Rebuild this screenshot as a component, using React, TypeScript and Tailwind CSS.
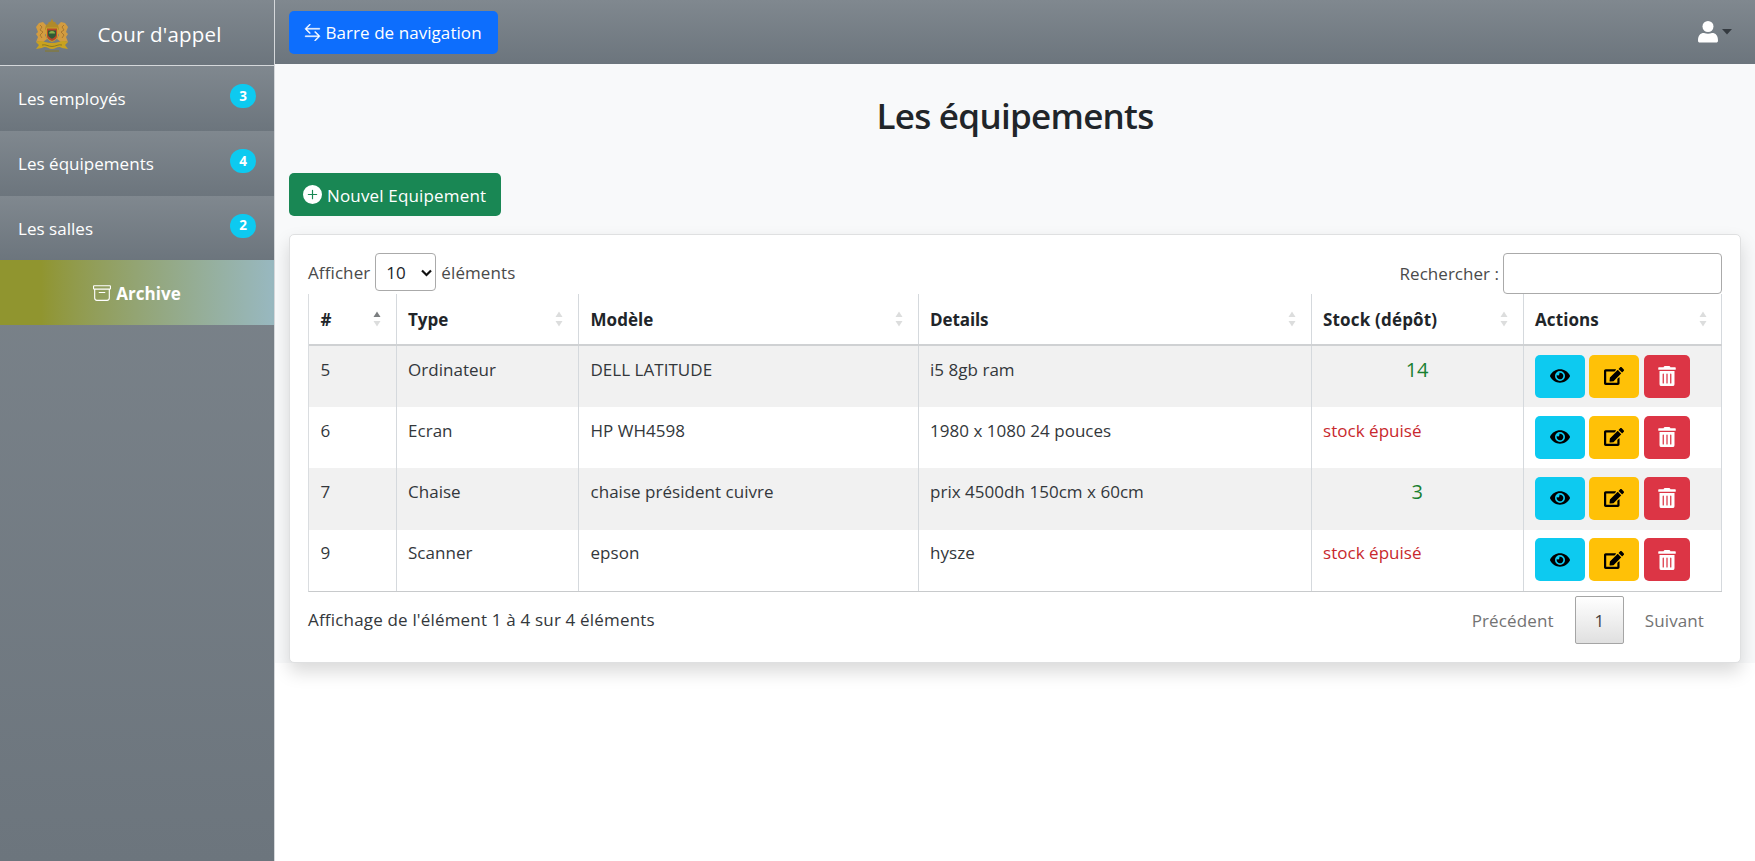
import { BsArrowLeftRight, BsPlusCircleFill, BsArchive } from "react-icons/bs";
import { FaEye, FaEdit, FaTrashAlt } from "react-icons/fa";

const menu = [
  { label: "Les employés", count: 3 },
  { label: "Les équipements", count: 4 },
  { label: "Les salles", count: 2 },
];

const columns = [
  { name: "#", track: "" },
  { name: "Type", track: "" },
  { name: "Modèle", track: "tracking-[0.05px]" },
  { name: "Details", track: "tracking-[-0.1px]" },
  { name: "Stock (dépôt)", track: "tracking-[0.18px]" },
  { name: "Actions", track: "tracking-[0.1px]" },
];

const rows = [
  { id: 5, type: "Ordinateur", model: "DELL LATITUDE", details: "i5 8gb ram", stock: 14 },
  { id: 6, type: "Ecran", model: "HP WH4598", details: "1980 x 1080 24 pouces", stock: 0 },
  { id: 7, type: "Chaise", model: "chaise président cuivre", details: "prix 4500dh 150cm x 60cm", stock: 3 },
  { id: 9, type: "Scanner", model: "epson", details: "hysze", stock: 0 },
];

function Emblem() {
  return (
    <svg width="34" height="34" viewBox="0 0 34 34" fill="none">
      <path d="M17 0.5l1.2 3 2.6 1-.8 3.5h-6l-.8-3.5 2.6-1z" fill="#b08a2c" />
      <path d="M9 11c1-5 5-6 8-6s7 1 8 6l-2 3H11z" fill="#b08a2a" />
      <path d="M4 5l4-1 3 3-1 4 2 3-2 3 2 4-4 3-4-1-3 1 2-5-2-3 2-2-2-5z" fill="#d39c40" />
      <path d="M30 5l-4-1-3 3 1 4-2 3 2 3-2 4 4 3 4-1 3 1-2-5 2-3-2-2 2-5z" fill="#d39c40" />
      <path d="M5 7l2 2-2 3 3 2-3 3 2 3M29 7l-2 2 2 3-3 2 3 3-2 3" stroke="#a9772f" strokeWidth="1" />
      <path d="M11.500 10h11v8c0 3-3 4.500-5.500 5.500-2.500-1-5.500-2.500-5.500-5.500z" fill="#b5482b" stroke="#c9a227" />
      <path d="M13 12.500h8v4c0 2-2 3.500-4 4.300-2-.8-4-2.300-4-4.300z" fill="#2e5a36" />
      <path d="M14 15.500a3 2.500 0 0 1 6 0z" fill="#86b04a" />
      <path d="M1 24c5-3 9 1 16 1s11-4 16-1l-3 3 3 4-6-1c-4-3-6 1-10 1s-6-4-10-1l-6 1 3-4z" fill="#c9a21f" />
      <path d="M7 27c4-1 6 1.500 10 1.500S23 26 27 27M10 33h14" stroke="#8a7a22" strokeWidth="1" />
    </svg>
  );
}

function SortMarks({ active }: { active: boolean }) {
  return (
    <svg width="8" height="16" viewBox="0 0 8 16" className="mb-[2px] shrink-0">
      <path d="M0.500 6 4 0.500 7.500 6z" fill={active ? "#7b7e80" : "#dcdddd"} />
      <path d="M0.500 10 4 15.500 7.500 10z" fill="#dcdddd" />
    </svg>
  );
}

function Actions() {
  return (
    <div className="flex gap-[4.500px] pl-[11px] pt-[8.500px]">
      <button className="flex h-[43px] w-[50px] items-center justify-center rounded-[5px] bg-[#0dcaf0] text-black">
        <FaEye size={20} />
      </button>
      <button className="flex h-[43px] w-[50px] items-center justify-center rounded-[5px] bg-[#ffc107] text-black">
        <FaEdit size={20} />
      </button>
      <button className="flex h-[43px] w-[46px] items-center justify-center rounded-[5px] bg-[#dc3545] text-white">
        <FaTrashAlt size={20} />
      </button>
    </div>
  );
}

const grid = "grid grid-cols-[87.5px_182.5px_339.5px_393px_212px_1fr]";

export default function App() {
  return (
    <div className="flex h-[861px] w-[1755px] overflow-hidden bg-white font-['Open_Sans','Noto_Sans',sans-serif] text-[17px] tracking-[0.03px] text-[#212529]">
      <aside className="flex w-[275px] shrink-0 flex-col border-r border-[#d5d8db] bg-linear-to-b from-[#80888f] to-[#6c757d] text-white">
        <div className="flex h-[66px] shrink-0 items-center border-b border-[#d5d8db] bg-linear-to-b from-[#80888f] to-[#6c757d] pl-[35px] pt-1">
          <Emblem />
          <span className="pl-[28.500px] text-[20.500px] tracking-[0.2px]">Cour d'appel</span>
        </div>
        {menu.map((m) => (
          <a key={m.label} className="flex h-[64.800px] justify-between bg-linear-to-b from-[#80888f] to-[#6c757d] px-[18px]">
            <span className="pt-[19px] leading-[27px]">{m.label}</span>
            <span className="mt-[18px] flex h-6 w-[26px] items-center justify-center rounded-full bg-[#0dcaf0] text-[13.500px] font-bold">{m.count}</span>
          </a>
        ))}
        <a className="flex h-[64.200px] items-center justify-center gap-[5px] bg-linear-to-r from-[#90952f] from-15% to-[#98b8c0] pt-[2px] font-bold">
          <BsArchive size={18} />
          <span>Archive</span>
        </a>
      </aside>
      <div className="flex grow flex-col">
        <header className="flex h-16 shrink-0 items-center justify-between bg-linear-to-b from-[#80888f] to-[#6c757d] pl-[14px] pr-[23px]">
          <button className="flex h-[43px] w-[209px] items-center gap-[4.500px] whitespace-nowrap rounded-[5px] bg-[#0d6efd] pl-[15px] text-white">
            <BsArrowLeftRight size={17} strokeWidth={0.4} />
            <span className="pt-[2px] tracking-[0.06px]">Barre de navigation</span>
          </button>
          <div className="flex items-center gap-[4px]">
            <svg width="20" height="22" viewBox="0 0 20 22" fill="#fff">
              <circle cx="10" cy="5.500" r="5.500" />
              <path d="M0 19.500C0 14.500 2.200 12 6 12c2.600 1 5.400 1 8 0 3.800 0 6 2.500 6 7.500 0 1.500-.6 2-2 2H2c-1.400 0-2-.5-2-2z" />
            </svg>
            <svg width="10" height="6" viewBox="0 0 10 6"><path d="M0 0h10L5 5.500z" fill="#343a40" /></svg>
          </div>
        </header>
        <main className="flex h-[598.500px] shrink-0 flex-col bg-[#f8f9fa] px-[14px]">
          <h1 className="h-[76px] pt-[28px] text-center text-[35px] font-semibold leading-[48px] tracking-[-0.72px]">Les équipements</h1>
          <button className="mt-[33px] flex h-[43px] w-[212px] shrink-0 items-center gap-[5px] whitespace-nowrap rounded-[5px] bg-[#198754] pl-[14px] text-white">
            <BsPlusCircleFill size={19} />
            <span className="pt-[2px] tracking-[0.16px]">Nouvel Equipement</span>
          </button>
          <section className="mt-[18px] h-[428.500px] shrink-0 rounded-[5px] border border-[#dfe0e1] bg-white px-[18px] pt-[18px] shadow-[0_9px_18px_rgba(0,0,0,0.15)]">
            <div className="flex h-[41px] justify-between text-[#4a4a4a]">
              <div className="flex h-[38px] items-center gap-[5px]">
                <span className="pt-[2px] tracking-[0.1px]">Afficher</span>
                <span className="flex h-[38px] w-[61px] items-center justify-between rounded-[4px] border border-[#aaa] pl-[10px] pr-[3px] pt-[1px] text-[#212529]">
                  10
                  <svg width="11" height="8" viewBox="0 0 11 8" fill="none"><path d="M1 1.500l4.500 4.500L10 1.500" stroke="#111" strokeWidth="2.200" /></svg>
                </span>
                <span className="pt-[2px] tracking-[0.1px]">éléments</span>
              </div>
              <div className="flex items-center gap-[4px]">
                <span className="pt-[1px]">Rechercher :</span>
                <input className="h-[41px] w-[219px] rounded-[4px] border border-[#aaa]" />
              </div>
            </div>
            <div className="border-b-[1.500px] border-l border-b-[#c8cacc] border-l-[#dadde0]">
              <div className={`${grid} h-[52px] border-b-2 border-[#cfd1d3] font-bold`}>
                {columns.map((c, i) => (
                  <div key={c.name} className="flex items-center justify-between border-r border-[#d5d9dd] pl-[11.500px] pr-[15px] pt-[2px] last:pr-[14px]">
                    <span className={c.track}>{c.name}</span>
                    <SortMarks active={i === 0} />
                  </div>
                ))}
              </div>
              {rows.map((r) => (
                <div key={r.id} className={`${grid} h-[61.200px] text-[#33373b] odd:bg-white even:bg-[#f1f1f1] *:border-r *:border-[#d5d9dd]`}>
                  <div className="pl-[11.500px] pt-[10.500px]">{r.id}</div>
                  <div className="pl-[11.500px] pt-[10.500px]">{r.type}</div>
                  <div className="pl-[11.500px] pt-[10.500px]">{r.model}</div>
                  <div className="pl-[11.500px] pt-[10.500px]">{r.details}</div>
                  {r.stock ? (
                    <div className="pt-[9px] text-center text-[20px] tracking-[-0.3px] text-[#198030]">{r.stock}</div>
                  ) : (
                    <div className="pl-[11.500px] pt-[10.500px] text-[#c8282d]">stock épuisé</div>
                  )}
                  <Actions />
                </div>
              ))}
            </div>
            <div className="flex justify-between pt-[4px] text-[#33373b]">
              <span className="pt-[11px] tracking-[0.18px]">Affichage de l'élément 1 à 4 sur 4 éléments</span>
              <div className="flex h-[48px] items-center text-[#737373]">
                <span className="pt-[1px] tracking-[0.15px]">Précédent</span>
                <span className="ml-[21px] flex h-[48px] w-[49px] items-center justify-center rounded-[2px] border border-[#a5a5a5] bg-linear-to-b from-white to-[#e0e0e0] pt-[1px] text-[#444]">1</span>
                <span className="ml-[21px] mr-[18px] pt-[1px] tracking-[0.1px]">Suivant</span>
              </div>
            </div>
          </section>
        </main>
      </div>
    </div>
  );
}
